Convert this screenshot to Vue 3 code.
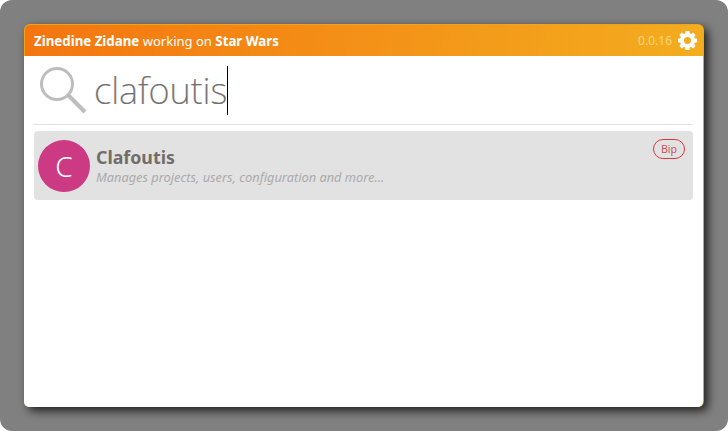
<script setup>
const user = 'Zinedine Zidane'
const project = 'Star Wars'
</script>

<template>
  <div class="screen">
    <div class="card">
      <header class="bar">
        <div class="who"><b>{{ user }}</b> <span class="link">working on</span> <b>{{ project }}</b></div>
        <div class="side">
          <span class="version">0.0.16</span>
          <svg class="gear" width="19" height="19" viewBox="0 0 20 20">
            <path fill="#fff" fill-rule="evenodd" d="M8 0h4l.5 2.600 1.300.6L16 1.700 18.500 4.200 17 6.400l.6 1.300 2.400.5v3.600l-2.400.5-.6 1.300 1.500 2.200-2.500 2.500-2.200-1.500-1.300.6L12 20H8l-.5-2.600-1.300-.6L4 18.300 1.500 15.800 3 13.600l-.6-1.300L0 11.800V8.200l2.400-.5.600-1.300L1.500 4.200 4 1.700l2.200 1.500 1.300-.6zM10 6.300a3.700 3.700 0 1 0 0 7.400 3.700 3.700 0 0 0 0-7.400z"/>
          </svg>
        </div>
      </header>
      <div class="body">
        <div class="search">
          <svg class="lens" width="47" height="47" viewBox="0 0 47 47" fill="none" stroke="#bdbdbd">
            <circle cx="17" cy="17" r="15.500" stroke-width="3"/>
            <path d="M28.500 28.500L45 45" stroke-width="4"/>
          </svg>
          <span class="query">clafoutis</span>
          <span class="caret"></span>
        </div>
        <div class="item">
          <div class="avatar">C</div>
          <div class="info">
            <div class="name">Clafoutis</div>
            <div class="desc">Manages projects, users, configuration and more...</div>
          </div>
          <span class="badge">Bip</span>
        </div>
      </div>
    </div>
  </div>
</template>

<style>
html, body { margin: 0; background: #fff; }
</style>

<style scoped>
.screen {
  width: 728px;
  height: 431px;
  box-sizing: border-box;
  padding: 24px;
  background: #808080;
  border-radius: 12px;
  font-family: "Noto Sans", sans-serif;
}
.card {
  height: 383px;
  box-sizing: border-box;
  border-radius: 6px;
  padding: 1px 1px 0;
  background: #f2a31c;
  box-shadow: 4px 4px 10px rgba(0, 0, 0, .75);
  display: flex;
  flex-direction: column;
}
.bar {
  height: 31px;
  flex: none;
  padding: 0 6px 0 9px;
  display: flex;
  justify-content: space-between;
  align-items: center;
  color: #fff;
  font-size: 13.3px;
  background: linear-gradient(100deg, #f4750f, #f3ad1f);
  border-radius: 5px 5px 0 0;
}
.who b { font-weight: 700; }
.link { font-size: 13px; }
.side { display: flex; align-items: center; gap: 6px; }
.version { color: #fbd77f; font-size: 12px; }
.body {
  flex: 1;
  background: #fff;
  margin-left: -1px;
  padding: 0 10px;
  border-radius: 0 0 5px 5px;
}
.search {
  height: 68px;
  display: flex;
  align-items: center;
  padding-left: 6px;
  border-bottom: 1px solid #e0e0e0;
}
.lens { flex: none; margin-right: 7px; }
.query {
  font-size: 36.300px;
  font-weight: 200;
  color: #707070;
  text-shadow: -.4px 0 rgba(240, 130, 40, .3), .4px 0 rgba(40, 120, 220, .35);
}
.caret { width: 1px; height: 49px; background: #000; }
.item {
  position: relative;
  margin-top: 6px;
  height: 69px;
  background: #e2e2e2;
  border-radius: 4px;
  display: flex;
  align-items: center;
  padding-left: 4px;
}
.avatar {
  width: 52px;
  height: 52px;
  border-radius: 50%;
  background: #cc3a84;
  color: #fff;
  font-size: 28px;
  font-weight: 300;
  display: flex;
  align-items: center;
  justify-content: center;
  flex: none;
}
.info { margin-left: 6px; }
.name { font-size: 17.8px; font-weight: 700; color: #736d68; line-height: 24px; }
.desc { font-size: 12.8px; font-style: italic; color: #aaa; line-height: 18px; margin-top: -1px; }
.badge {
  position: absolute;
  top: 8px;
  right: 8px;
  border: 1px solid #d9363e;
  border-radius: 10px;
  color: #c8505a;
  font-size: 10.500px;
  line-height: 18px;
  padding: 0 7px;
}
</style>
